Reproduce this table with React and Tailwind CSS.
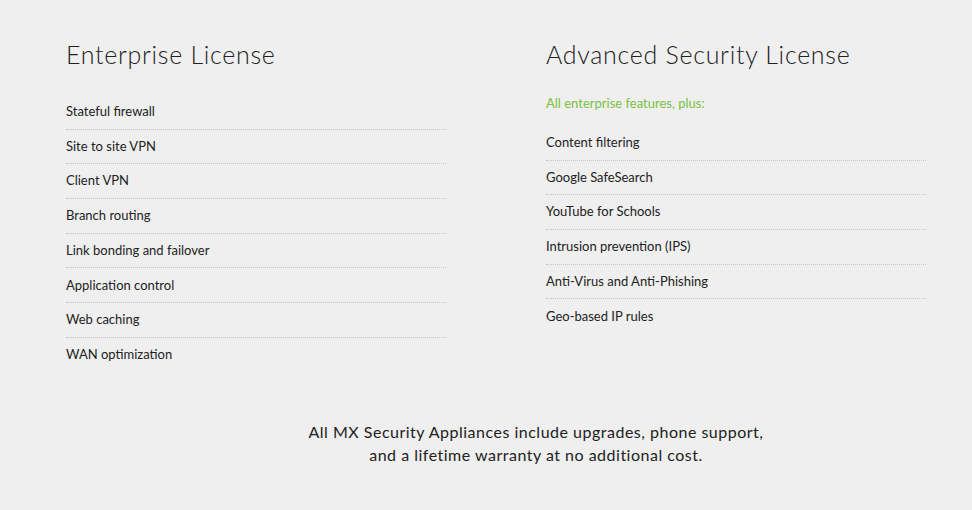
import React from "react";

const enterprise = [
  "Stateful firewall",
  "Site to site VPN",
  "Client VPN",
  "Branch routing",
  "Link bonding and failover",
  "Application control",
  "Web caching",
  "WAN optimization",
];

const advanced = [
  "Content filtering",
  "Google SafeSearch",
  "YouTube for Schools",
  "Intrusion prevention (IPS)",
  "Anti-Virus and Anti-Phishing",
  "Geo-based IP rules",
];

const FeatureList = ({ items }) => (
  <ul>
    {items.map((item, i) => (
      <li
        key={item}
        className={`h-[34.7px] flex items-center text-[13px] text-[#222] ${
          i < items.length - 1 ? "border-b border-dotted border-[#c8c8c8]" : ""
        }`}
      >
        {item}
      </li>
    ))}
  </ul>
);

export default function App() {
  return (
    <div
      className="w-[972px] h-[510px] bg-[#efefef] text-[#222]"
      style={{ fontFamily: "Lato, 'Noto Sans', sans-serif" }}
    >
      <div className="flex gap-[100px] pl-[66px] pt-[38px]">
        {/* Enterprise */}
        <div className="w-[380px]">
          <h2 className="text-[25px] font-light leading-[32px] tracking-[0.7px]">
            Enterprise License
          </h2>
          <div className="mt-[25px]">
            <FeatureList items={enterprise} />
          </div>
        </div>

        {/* Advanced Security */}
        <div className="w-[380px]">
          <h2 className="text-[25px] font-light leading-[32px] tracking-[0.7px]">
            Advanced Security License
          </h2>
          <p className="mt-[25px] text-[13px] leading-[16px] text-[#7ac142]">
            All enterprise features, plus:
          </p>
          <div className="mt-[15px]">
            <FeatureList items={advanced} />
          </div>
        </div>
      </div>

      <div className="mt-[47px] pl-[100px] text-center text-[16px] leading-[23px] tracking-[0.5px] text-[#222]">
        <p>All MX Security Appliances include upgrades, phone support,</p>
        <p>and a lifetime warranty at no additional cost.</p>
      </div>
    </div>
  );
}
